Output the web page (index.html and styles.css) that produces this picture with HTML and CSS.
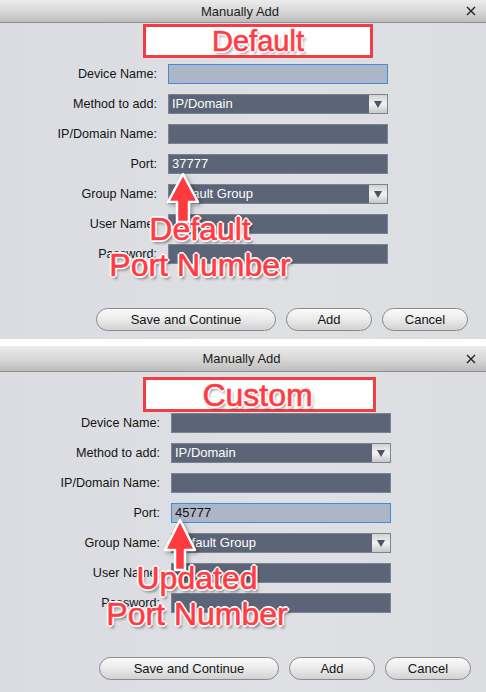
FILE: index.html
```html
<!DOCTYPE html>
<html>
<head>
<meta charset="utf-8">
<link rel="stylesheet" href="styles.css">
</head>
<body>
<section class="dialog dialog-a">
  <header class="titlebar">
    <span class="title">Manually Add</span>
    <svg class="close" width="10" height="10" viewBox="0 0 10 10"><path d="M1 1L9 9M9 1L1 9" stroke="#222" stroke-width="1.4"/></svg>
  </header>
  <div class="badge"><span class="badge-text">Default</span></div>
  <div class="form">
    <label>Device Name:</label><div class="field focus"></div>
    <label>Method to add:</label><div class="field select"><span>IP/Domain</span><i class="drop"></i></div>
    <label>IP/Domain Name:</label><div class="field"></div>
    <label>Port:</label><div class="field"><span>37777</span></div>
    <label>Group Name:</label><div class="field select"><span>Default Group</span><i class="drop"></i></div>
    <label>User Name:</label><div class="field"></div>
    <label>Password:</label><div class="field"></div>
  </div>
  <div class="buttons">
    <button class="btn btn-wide">Save and Continue</button>
    <button class="btn">Add</button>
    <button class="btn">Cancel</button>
  </div>
  <div class="note note-a">
    <svg class="arrow" width="44" height="58" viewBox="0 0 44 58"><path d="M22 4L37 32H28V52H16V32H7Z" fill="#ff3b40" stroke="#fff" stroke-width="2.5" stroke-linejoin="round"/></svg>
    <div class="note-text">Default<br>Port Number</div>
  </div>
</section>
<div class="gap"></div>
<section class="dialog dialog-b">
  <header class="titlebar">
    <span class="title">Manually Add</span>
    <svg class="close" width="10" height="10" viewBox="0 0 10 10"><path d="M1 1L9 9M9 1L1 9" stroke="#222" stroke-width="1.4"/></svg>
  </header>
  <div class="badge"><span class="badge-text">Custom</span></div>
  <div class="form">
    <label>Device Name:</label><div class="field"></div>
    <label>Method to add:</label><div class="field select"><span>IP/Domain</span><i class="drop"></i></div>
    <label>IP/Domain Name:</label><div class="field"></div>
    <label>Port:</label><div class="field focus"><span>45777</span></div>
    <label>Group Name:</label><div class="field select"><span>Default Group</span><i class="drop"></i></div>
    <label>User Name:</label><div class="field"></div>
    <label>Password:</label><div class="field"></div>
  </div>
  <div class="buttons">
    <button class="btn btn-wide">Save and Continue</button>
    <button class="btn">Add</button>
    <button class="btn">Cancel</button>
  </div>
  <div class="note note-b">
    <svg class="arrow" width="44" height="58" viewBox="0 0 44 58"><path d="M22 4L37 34H27V54H17V34H7Z" fill="#ff3b40" stroke="#fff" stroke-width="2.5" stroke-linejoin="round"/></svg>
    <div class="note-text">Updated<br>Port Number</div>
  </div>
</section>
</body>
</html>
```
FILE: styles.css
```css
* { box-sizing: border-box; }
html, body { margin: 0; padding: 0; background: #fff; }
body {
  width: 486px;
  height: 692px;
  overflow: hidden;
  font-family: "Liberation Sans", Arial, sans-serif;
  font-size: 13px;
  color: #141414;
}
.dialog {
  position: relative;
  display: flex;
  flex-direction: column;
  background: linear-gradient(90deg, #dadce1 0%, #dfe0e4 60%, #dcdde1 100%);
}
.dialog-a { height: 339px; }
.dialog-b { height: 346px; padding-left: 3px; }
.gap { height: 7px; background: #fff; }
.titlebar {
  position: relative;
  display: flex;
  align-items: center;
  justify-content: center;
  background: linear-gradient(180deg, #ececec 0%, #d6d6d6 55%, #bcbcbc 100%);
  border-bottom: 1px solid #8e8e8e;
  margin-left: -3px;
  padding-left: 3px;
}
.dialog-a .titlebar { height: 23px; margin-left: 0; padding-left: 0; }
.dialog-b .titlebar { height: 26px; }
.title { color: #1c1c1c; font-size: 13px; margin-left: -6px; }
.close { position: absolute; right: 10px; top: 50%; margin-top: -5px; }
.badge {
  margin-left: 143px;
  width: 230px;
  height: 34px;
  background: #fff;
  border: 3px solid #f23d44;
  display: flex;
  align-items: center;
  justify-content: center;
  margin-top: 1px;
}
.dialog-b .badge { margin-left: 140px; width: 233px; height: 35px; margin-top: 5px; }
.badge-text {
  font-size: 29px;
  line-height: 1;
  color: #ff3b44;
  margin-left: 0;
  -webkit-text-stroke: 0.6px #ff3b44;
  text-shadow: -1px -1px 0 #fff, 1px -1px 0 #fff, -1px 1px 0 #fff, 1px 1px 0 #fff,
    0 -2px 0 #fff, 0 2px 0 #fff, -2px 0 0 #fff, 2px 0 0 #fff, 2px 3px 3px rgba(0,0,0,0.45);
}
.dialog-b .badge-text { font-size: 32px; margin-left: -4px; }
.form {
  display: grid;
  grid-template-columns: 157px 220px;
  column-gap: 11px;
  row-gap: 10px;
  grid-auto-rows: 20px;
  margin-top: 6px;
}
.dialog-b .form { margin-top: 1px; }
.form label {
  text-align: right;
  line-height: 20px;
  white-space: nowrap;
  font-size: 12.6px;
}
.field {
  position: relative;
  background: #5c6477;
  border: 1px solid #7b8292;
  color: #fff;
  line-height: 18px;
  padding-left: 3px;
  overflow: hidden;
}
.field.focus {
  background: #adb6c7;
  border: 1px solid #3d8fdc;
  color: #111;
}
.drop {
  position: absolute;
  right: 0;
  top: 0;
  bottom: 0;
  width: 18px;
  background: linear-gradient(180deg, #d2d2d2, #f2f2f2 50%, #c8c8c8);
}
.drop::after {
  content: "";
  position: absolute;
  left: 5px;
  top: 6px;
  border-left: 4px solid transparent;
  border-right: 4px solid transparent;
  border-top: 7px solid #4b5366;
}
.buttons {
  display: flex;
  gap: 10px;
  margin-top: 44px;
  margin-left: 96px;
}
.btn {
  width: 86px;
  height: 23px;
  border-radius: 12px;
  border: 1px solid #8a8a8a;
  background: linear-gradient(180deg, #fbfbfb 0%, #ececec 45%, #d2d2d2 100%);
  font-family: "Liberation Sans", Arial, sans-serif;
  font-size: 13px;
  color: #141414;
  padding: 0;
}
.btn-wide { width: 180px; }
.note { position: absolute; pointer-events: none; width: 200px; top: 170px; }
.note-a { left: 100px; }
.note-b { left: 97px; }
.arrow {
  position: absolute;
  left: 61px;
  top: 0;
  filter: drop-shadow(2px 2px 2px rgba(0,0,0,0.35));
}
.note-text {
  position: absolute;
  left: 0;
  width: 200px;
  text-align: center;
  font-size: 32px;
  line-height: 36px;
  color: #ff3b44;
  white-space: nowrap;
  -webkit-text-stroke: 0.6px #ff3b44;
  text-shadow: -1px -1px 0 #fff, 1px -1px 0 #fff, -1px 1px 0 #fff, 1px 1px 0 #fff,
    0 -2px 0 #fff, 0 2px 0 #fff, -2px 0 0 #fff, 2px 0 0 #fff, 2px 3px 3px rgba(0,0,0,0.5);
}
.note-a .note-text { top: 41px; }
.note-b .note-text { top: 44px; }
```
